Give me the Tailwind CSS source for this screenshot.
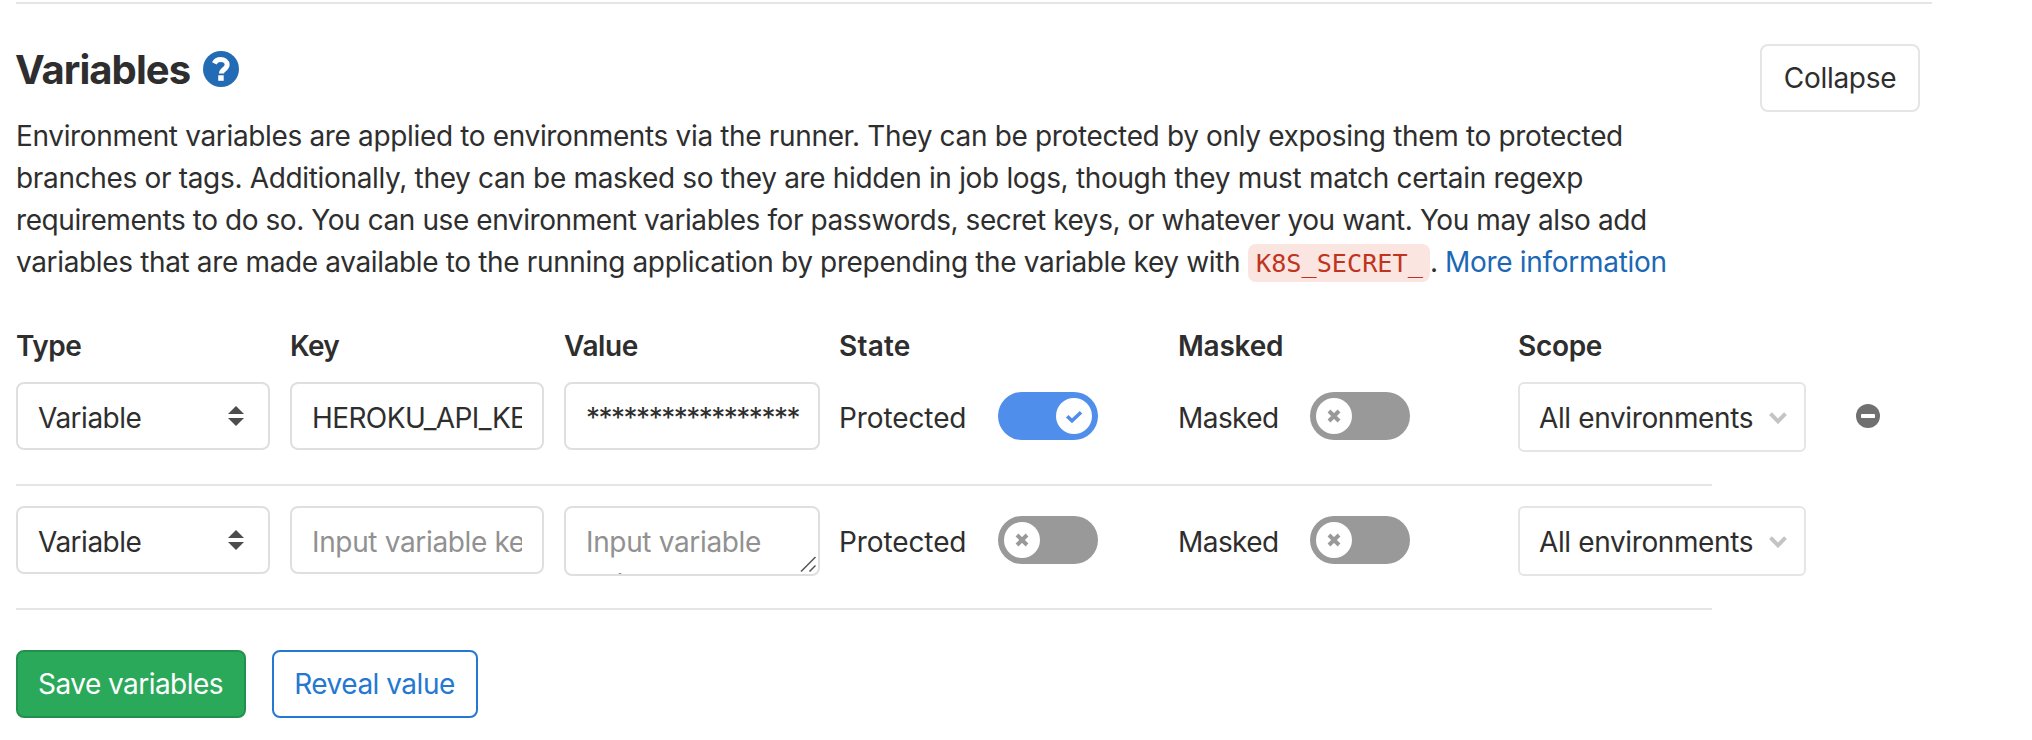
<!DOCTYPE html>
<html lang="en">
<head>
<meta charset="utf-8">
<title>Variables</title>
<script src="https://cdn.jsdelivr.net/npm/@tailwindcss/browser@4"></script>
</head>
<body class="bg-white pt-0.5 pl-4 font-['Inter','Liberation_Sans',sans-serif] text-[28px] leading-[42px] text-[#2e2e2e] whitespace-nowrap overflow-hidden">
<main class="w-[1916px] border-t-2 border-[#e5e5e5]">
  <header class="flex justify-between pr-3 h-[111px]">
    <h4 class="flex items-start pt-[42px] text-[40px] leading-[48px] font-bold tracking-[-0.95px]">
      <span class="-ml-px w-[188px]">Variables</span>
      <svg class="mt-[5px] size-9" viewBox="0 0 36 36" fill="none">
        <circle cx="18" cy="18" r="18" fill="#236bb5"/>
        <path d="M11.3 12.4C12.4 10 14.8 8.5 17.8 8.5c3.4 0 6.3 1.9 6.3 5.2 0 4.4-5.6 4.6-5.6 8.8" stroke="#fff" stroke-width="5"/>
        <rect x="15.2" y="24.3" width="5.5" height="5.5" fill="#fff"/>
      </svg>
    </h4>
    <button class="mt-10 h-[68px] w-40 rounded-lg border-2 border-[#e5e5e5] text-center tracking-[-0.3px]">Collapse</button>
  </header>

  <p>
    <span class="block tracking-[-0.345px]">Environment variables are applied to environments via the runner. They can be protected by only exposing them to protected</span>
    <span class="block tracking-[-0.33px]">branches or tags. Additionally, they can be masked so they are hidden in job logs, though they must match certain regexp</span>
    <span class="block tracking-[-0.425px]">requirements to do so. You can use environment variables for passwords, secret keys, or whatever you want. You may also add</span>
    <span class="flex h-[42px] items-start"><span class="w-[1232px] tracking-[-0.354px]">variables that are made available to the running application by prepending the variable key with</span><code class="mt-[3px] h-[38px] w-[182px] rounded-lg bg-[#fbe5e1] pl-2 font-['DejaVu_Sans_Mono',monospace] text-[25.2px] leading-[39px] text-[#c0341d]">K8S_SECRET_</code><span class="w-[15px]">.</span><a class="tracking-[-0.3px] text-[#1b69b6]">More information</a></span>
  </p>

  <div class="mt-[42px] grid h-[57px] grid-cols-[274px_274px_274px_340px_339px_338px_auto] font-semibold">
    <span class="tracking-[-0.5px]">Type</span>
    <span class="tracking-[-0.7px]">Key</span>
    <span class="tracking-[-0.4px]">Value</span>
    <span class="pl-px tracking-[0.2px]">State</span>
    <span class="tracking-[-0.23px]">Masked</span>
    <span class="pl-px tracking-[-0.3px]">Scope</span>
  </div>

  <section class="grid h-[104px] grid-cols-[274px_274px_274px_340px_339px_338px_auto] items-start">
    <div class="flex h-[68px] w-[254px] items-center justify-between rounded-lg border-2 border-[#dfdfdf] pl-5 pr-6">
      <span class="pt-[3px] tracking-[-0.5px]">Variable</span>
      <svg class="h-5 w-4" viewBox="0 0 16 20" fill="#4d4d4d"><path d="M0 8 8 0l8 8zM0 12h16l-8 8z"/></svg>
    </div>
    <div class="flex h-[68px] w-[254px] items-center rounded-lg border-2 border-[#dfdfdf] px-5">
      <span class="w-[210px] overflow-hidden pt-[3px] tracking-[-0.6px]">HEROKU_API_KEY</span>
    </div>
    <div class="flex h-[68px] w-64 items-center rounded-lg border-2 border-[#dfdfdf] px-5">
      <span class="pt-[3px] tracking-[-1.5px]">*****************</span>
    </div>
    <div class="flex h-[68px] items-center">
      <span class="w-40 pt-[3px] pl-px tracking-[-0.1px]">Protected</span>
      <span class="flex h-12 w-[100px] items-center justify-end rounded-full bg-[#4f8eea] px-1.5">
        <svg class="size-9" viewBox="0 0 36 36" fill="none"><circle cx="18" cy="18" r="18" fill="#fff"/><path d="M11.2 18.2 16 22.8l9-8.5" stroke="#4f8eea" stroke-width="3.6"/></svg>
      </span>
    </div>
    <div class="flex h-[68px] items-center">
      <span class="w-[132px] pt-[3px] tracking-[-0.57px]">Masked</span>
      <span class="flex h-12 w-[100px] items-center rounded-full bg-[#999] px-1.5">
        <svg class="size-9" viewBox="0 0 36 36" fill="none"><circle cx="18" cy="18" r="18" fill="#fff"/><path d="m13 13 10 10M23 13 13 23" stroke="#999" stroke-width="4"/></svg>
      </span>
    </div>
    <div class="ml-px flex h-[70px] w-72 items-center justify-between rounded-md border-2 border-[#e5e5e5] pl-[19px] pr-[17px]">
      <span class="pt-px tracking-[-0.38px]">All environments</span>
      <svg class="mt-0.5 h-3 w-[18px]" viewBox="0 0 18 12" fill="none"><path d="m1.5 1.7 7.5 7.6 7.5-7.6" stroke="#c4c4c4" stroke-width="4"/></svg>
    </div>
    <svg class="mt-[22px] ml-px size-6" viewBox="0 0 24 24"><circle cx="12" cy="12" r="12" fill="#707070"/><rect x="5" y="10" width="14" height="4" rx=".8" fill="#fff"/></svg>
  </section>
  <div class="-mt-0.5 h-0.5 w-[1696px] bg-[#e5e5e5]"></div>

  <section class="mt-5 grid h-[102px] grid-cols-[274px_274px_274px_340px_339px_338px_auto] items-start">
    <div class="flex h-[68px] w-[254px] items-center justify-between rounded-lg border-2 border-[#dfdfdf] pl-5 pr-6">
      <span class="pt-[3px] tracking-[-0.5px]">Variable</span>
      <svg class="h-5 w-4" viewBox="0 0 16 20" fill="#4d4d4d"><path d="M0 8 8 0l8 8zM0 12h16l-8 8z"/></svg>
    </div>
    <div class="flex h-[68px] w-[254px] items-center rounded-lg border-2 border-[#dfdfdf] px-5">
      <span class="w-[210px] overflow-hidden pt-[3px] tracking-[-0.35px] text-[#919191]">Input variable key</span>
    </div>
    <div class="relative h-[70px] w-64 overflow-hidden rounded-lg border-2 border-[#dfdfdf] px-5 pt-[13px]">
      <span class="block w-[200px] whitespace-normal tracking-[-0.35px] text-[#919191]">Input variable value</span>
      <svg class="absolute right-0.5 bottom-0.5 size-4" viewBox="0 0 16 16" fill="none" stroke="#555" stroke-width="1.5"><path d="M1 15.5 15.5 1M9.5 15.5l6-6"/></svg>
    </div>
    <div class="flex h-[68px] items-center">
      <span class="w-40 pt-[3px] pl-px tracking-[-0.1px]">Protected</span>
      <span class="flex h-12 w-[100px] items-center rounded-full bg-[#999] px-1.5">
        <svg class="size-9" viewBox="0 0 36 36" fill="none"><circle cx="18" cy="18" r="18" fill="#fff"/><path d="m13 13 10 10M23 13 13 23" stroke="#999" stroke-width="4"/></svg>
      </span>
    </div>
    <div class="flex h-[68px] items-center">
      <span class="w-[132px] pt-[3px] tracking-[-0.57px]">Masked</span>
      <span class="flex h-12 w-[100px] items-center rounded-full bg-[#999] px-1.5">
        <svg class="size-9" viewBox="0 0 36 36" fill="none"><circle cx="18" cy="18" r="18" fill="#fff"/><path d="m13 13 10 10M23 13 13 23" stroke="#999" stroke-width="4"/></svg>
      </span>
    </div>
    <div class="ml-px flex h-[70px] w-72 items-center justify-between rounded-md border-2 border-[#e5e5e5] pl-[19px] pr-[17px]">
      <span class="pt-px tracking-[-0.38px]">All environments</span>
      <svg class="mt-0.5 h-3 w-[18px]" viewBox="0 0 18 12" fill="none"><path d="m1.5 1.7 7.5 7.6 7.5-7.6" stroke="#c4c4c4" stroke-width="4"/></svg>
    </div>
  </section>
  <div class="h-0.5 w-[1696px] bg-[#e5e5e5]"></div>

  <footer class="mt-10 flex gap-[26px]">
    <button class="h-[68px] w-[230px] rounded-lg border-2 border-[#25904d] bg-[#2aa95b] pr-px tracking-[-0.55px] text-white">Save variables</button>
    <button class="h-[68px] w-[206px] rounded-lg border-2 border-[#2478d0] pr-px tracking-[-0.5px] text-[#2478d0]">Reveal value</button>
  </footer>
</main>
</body>
</html>
